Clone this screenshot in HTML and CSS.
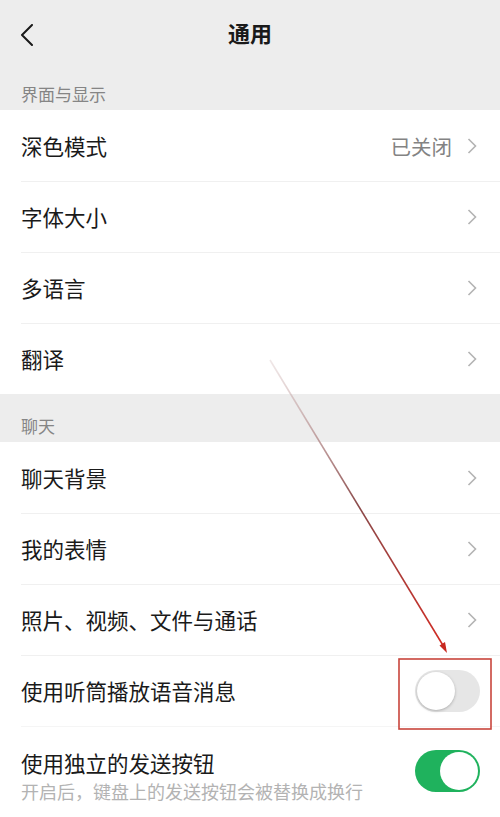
FILE: index.html
```html
<!DOCTYPE html>
<html lang="zh-CN">
<head>
    <meta charset="UTF-8">
    <meta name="viewport" content="width=device-width, initial-scale=1.0">
    <title>通用</title>
    <link rel="stylesheet" href="styles.css">
</head>
<body>
    <div class="page">
        <!-- Top bar -->
        <div class="navbar">
            <svg class="back" width="14" height="22" viewBox="0 0 14 22">
                <path d="M12 1 L2 11 L12 21" fill="none" stroke="#1a1a1a" stroke-width="2" stroke-linecap="round" stroke-linejoin="round"/>
            </svg>
            <div class="title">通用</div>
        </div>

        <div class="group-title first">界面与显示</div>
        <div class="list">
            <div class="row">
                <span class="label">深色模式</span>
                <span class="value">已关闭</span>
                <svg class="arrow" width="10" height="16" viewBox="0 0 10 16"><path d="M1.5 1 L8.5 8 L1.5 15" /></svg>
            </div>
            <div class="row">
                <span class="label">字体大小</span>
                <svg class="arrow" width="10" height="16" viewBox="0 0 10 16"><path d="M1.5 1 L8.5 8 L1.5 15" /></svg>
            </div>
            <div class="row">
                <span class="label">多语言</span>
                <svg class="arrow" width="10" height="16" viewBox="0 0 10 16"><path d="M1.5 1 L8.5 8 L1.5 15" /></svg>
            </div>
            <div class="row">
                <span class="label">翻译</span>
                <svg class="arrow" width="10" height="16" viewBox="0 0 10 16"><path d="M1.5 1 L8.5 8 L1.5 15" /></svg>
            </div>
        </div>

        <div class="group-title">聊天</div>
        <div class="list">
            <div class="row">
                <span class="label">聊天背景</span>
                <svg class="arrow" width="10" height="16" viewBox="0 0 10 16"><path d="M1.5 1 L8.5 8 L1.5 15" /></svg>
            </div>
            <div class="row">
                <span class="label">我的表情</span>
                <svg class="arrow" width="10" height="16" viewBox="0 0 10 16"><path d="M1.5 1 L8.5 8 L1.5 15" /></svg>
            </div>
            <div class="row">
                <span class="label">照片、视频、文件与通话</span>
                <svg class="arrow" width="10" height="16" viewBox="0 0 10 16"><path d="M1.5 1 L8.5 8 L1.5 15" /></svg>
            </div>
            <div class="row">
                <span class="label">使用听筒播放语音消息</span>
                <div class="switch"><div class="knob"></div></div>
            </div>
            <div class="row tall">
                <div class="label-wrap">
                    <div class="label">使用独立的发送按钮</div>
                    <div class="desc">开启后，键盘上的发送按钮会被替换成换行</div>
                </div>
                <div class="switch on"><div class="knob"></div></div>
            </div>
        </div>

        <!-- red marker drawn on top -->
        <svg class="mark" width="500" height="817" viewBox="0 0 500 817">
            <defs>
                <linearGradient id="lineFade" x1="270" y1="360" x2="446" y2="650" gradientUnits="userSpaceOnUse">
                    <stop offset="0" stop-color="#d9c4c4" stop-opacity="0.4"/>
                    <stop offset="0.5" stop-color="#8a4a4a"/>
                    <stop offset="1" stop-color="#d42a22"/>
                </linearGradient>
            </defs>
            <line x1="270" y1="360" x2="444" y2="647" stroke="url(#lineFade)" stroke-width="1.6"/>
            <path d="M447 653 L439.5 645.5 L445 642 Z" fill="#c8281f"/>
            <rect x="399" y="659" width="92" height="70" fill="none" stroke="#c9453c" stroke-width="1.6"/>
        </svg>
    </div>
</body>
</html>
```

FILE: styles.css
```css
body {
    margin: 0;
    background-color: #ffffff;
    font-family: "Noto Sans CJK SC", "Noto Sans", sans-serif;
    color: #1a1a1a;
}

.page {
    position: relative;
    width: 500px;
    height: 817px;
    overflow: hidden;
    background-color: #ededed;
}

.navbar {
    height: 70px;
    box-sizing: border-box;
    padding-top: 17px;
    display: flex;
    justify-content: center;
    position: relative;
}

.navbar .back {
    position: absolute;
    left: 20px;
    top: 24px;
}

.title {
    font-size: 22px;
    font-weight: 700;
    line-height: 30px;
}

.group-title {
    padding: 20px 21px 4px;
    font-size: 17px;
    line-height: 24px;
    color: #858585;
}

.group-title.first {
    padding-top: 12px;
}

.list {
    background-color: #ffffff;
}

.row {
    height: 71px;
    box-sizing: border-box;
    margin-left: 21px;
    padding-right: 23px;
    display: flex;
    align-items: center;
}

.row + .row {
    border-top: 1px solid #f0f0f0;
}

.row.tall {
    border-top-color: #f5f5f5;
}

.row .label {
    flex: 1;
    font-size: 21.5px;
    line-height: 30px;
}

.value {
    font-size: 20.5px;
    color: #838383;
    margin-right: 15px;
}

.arrow path {
    fill: none;
    stroke: #b3b3b3;
    stroke-width: 1.6;
}

.switch {
    width: 65px;
    height: 42px;
    border-radius: 21px;
    background-color: #e6e6e6;
    margin-right: -3px;
    position: relative;
}

.switch .knob {
    position: absolute;
    top: 2px;
    left: 2px;
    width: 38px;
    height: 38px;
    border-radius: 50%;
    background-color: #ffffff;
    box-shadow: 0 1px 3px rgba(0, 0, 0, 0.25);
}

.switch.on {
    background-color: #1fb25d;
}

.switch.on .knob {
    left: auto;
    right: 2px;
    box-shadow: none;
}

.row.tall {
    height: 110px;
    align-items: flex-start;
    padding-top: 21px;
}

.label-wrap {
    flex: 1;
}

.desc {
    font-size: 18px;
    line-height: 26px;
    color: #b3b3b3;
}

.row.tall .switch {
    margin-top: 2px;
}

.mark {
    position: absolute;
    left: 0;
    top: 0;
    pointer-events: none;
}
```
